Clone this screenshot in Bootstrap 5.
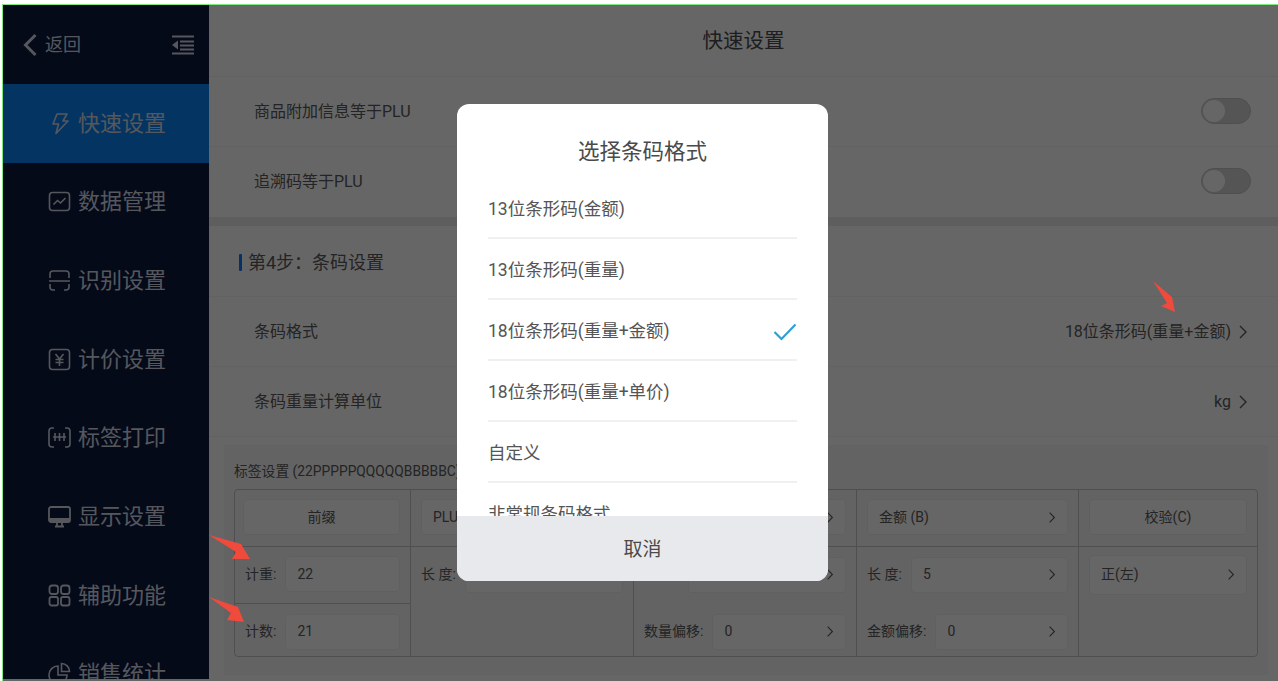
<!DOCTYPE html>
<html lang="zh-CN">
<head>
  <meta charset="UTF-8">
  <meta name="viewport" content="width=device-width, initial-scale=1.0">
  <title>快速设置</title>
  <link href="https://cdn.jsdelivr.net/npm/bootstrap@5.3.1/dist/css/bootstrap.min.css" rel="stylesheet">
  <style>
    html, body {
      height: 681px;
      overflow: hidden;
      background: #fff;
    }
    body {
      font-family: Roboto, "Noto Sans CJK SC", sans-serif;
      color: #5a5a5a;
    }
    .frame {
      position: relative;
      height: 677px;
      margin: 4px 0 0 2px;
      border-top: 1px solid #7fe87f;
      border-left: 1px solid #7fe87f;
      overflow: hidden;
      background: #fff;
    }
    .scrim {
      background: rgba(0, 0, 0, .6);
    }

    /* sidebar */
    .side {
      width: 206px;
      height: 674px;
      overflow: hidden;
      background: #0a193c;
      color: #d6dae6;
      flex: none;
    }
    .side-top {
      height: 79px;
      padding: 0 15px 0 20px;
      font-size: 18px;
    }
    .side-item {
      height: 78.67px;
      padding-left: 45px;
      gap: 7px;
      font-size: 22px;
    }
    .side-item.on {
      background: #0a84f5;
    }
    .side svg {
      flex: none;
    }

    /* main column */
    .page-head {
      height: 72px;
      padding-top: 2px;
      font-size: 20.5px;
      color: #4c4c4c;
      border-bottom: 1px solid #f3f3f3;
    }
    .set-row {
      height: 70px;
      padding: 0 27px 0 45px;
      font-size: 16px;
      border-bottom: 1px solid #f5f5f5;
    }
    .set-val {
      gap: 7px;
      font-size: 16px;
      margin-right: 3px;
    }
    .gap-band {
      height: 9px;
      background: #ececec;
    }
    .step-title {
      height: 71px;
      padding: 2px 0 0 30px;
      gap: 6px;
      font-size: 18px;
      border-bottom: 1px solid #f5f5f5;
    }
    .step-bar {
      width: 3px;
      height: 17px;
      border-radius: 1px;
      background: #0d7cff;
    }
    .toggle {
      width: 50px;
      height: 26px;
      margin-top: -2px;
      border-radius: 13px;
      background: #d4d4d4;
      border: 1px solid #c6c6c6;
      padding: 1px;
    }
    .toggle i {
      display: block;
      width: 22px;
      height: 22px;
      border-radius: 50%;
      background: #fff;
    }

    /* label panel */
    .label-panel {
      margin: 8px 10px 0 15px;
      padding: 16px 10px 18px;
      background: #f8f8f8;
    }
    .label-title {
      font-size: 13.8px;
      line-height: 20px;
      margin-bottom: 8px;
      white-space: nowrap;
    }
    .label-grid {
      height: 168px;
      border: 1px solid #c6c6c6;
      border-radius: 4px;
      font-size: 14px;
    }
    .gcol {
      flex: none;
      border-right: 1px solid #c6c6c6;
    }
    .gcol:last-child {
      border-right: 0;
    }
    .gcell {
      height: 57px;
      padding: 0 10px 2px 10px;
      gap: 9px;
      white-space: nowrap;
    }
    .gcell.line {
      border-bottom: 1px solid #c6c6c6;
    }
    .fbox {
      height: 36px;
      flex: 1;
      min-width: 0;
      padding: 0 11px;
      background: #fff;
      border: 1px solid #f0f0f0;
      border-radius: 4px;
    }
    .fbox.tall {
      height: 40px;
    }
    .fbox.wide {
      margin-left: -2px;
    }

    /* modal */
    .picker {
      position: absolute;
      top: 99px;
      left: 454px;
      width: 371px;
      height: 477px;
      border-radius: 12px;
      background: #fff;
      overflow: hidden;
    }
    .picker-title {
      height: 74px;
      padding-top: 23px;
      font-size: 21.5px;
      line-height: 50px;
      color: #4a4a4a;
      text-align: center;
    }
    .picker-list {
      height: 338px;
      overflow: hidden;
      padding: 0 31px;
    }
    .picker-row {
      height: 61px;
      padding-top: 4px;
      font-size: 17.5px;
      color: #555;
      border-bottom: 2px solid #f0f0f0;
      flex: none;
    }
    .picker-foot {
      height: 65px;
      padding-top: 4px;
      background: #e8e9ec;
      font-size: 19px;
      color: #4a4a4a;
    }
    .arrows {
      position: absolute;
      top: -5px;
      left: -3px;
    }
  </style>
</head>
<body>
  <svg width="0" height="0" class="position-absolute">
    <symbol id="chev" viewBox="0 0 10 16"><path d="M2 2l6 6-6 6" fill="none" stroke="currentColor" stroke-width="1.4"/></symbol>
  </svg>

  <div class="frame">
    <div class="d-flex h-100">
      <!-- Sidebar -->
      <nav class="side">
        <div class="side-top d-flex align-items-center">
          <svg width="14" height="24" viewBox="0 0 14 24" class="me-1"><path d="M12.500 2L2.500 12l10 10" fill="none" stroke="currentColor" stroke-width="3"/></svg>
          <span class="flex-grow-1 ps-1">返回</span>
          <svg width="22" height="20" viewBox="0 0 22 20"><path d="M0 1.500h22M8 6.500h14M8 10.500h14M8 14.500h14M0 18.500h22" fill="none" stroke="currentColor" stroke-width="2"/><path d="M6 5.500v9l-6-4.500z" fill="currentColor"/></svg>
        </div>
        <div class="side-item on d-flex align-items-center">
          <svg width="23" height="23" viewBox="0 0 23 23" fill="none" stroke="currentColor" stroke-width="1.6" stroke-linejoin="round"><path d="M9 2h10l-4 7h5L8 21.500l2.500-9.500H5z"/></svg>
          快速设置
        </div>
        <div class="side-item d-flex align-items-center">
          <svg width="23" height="23" viewBox="0 0 23 23" fill="none" stroke="currentColor" stroke-width="1.6"><rect x="1.500" y="2.500" width="20" height="18" rx="3"/><path d="M5.500 14.500l4-4 3 2.500 5-5"/></svg>
          数据管理
        </div>
        <div class="side-item d-flex align-items-center">
          <svg width="23" height="23" viewBox="0 0 23 23" fill="none" stroke="currentColor" stroke-width="1.6"><path d="M2 9V5a3 3 0 0 1 3-3h13a3 3 0 0 1 3 3v4M2 15v3a3 3 0 0 0 3 3h2M21 15v3a3 3 0 0 1-3 3h-2M1 12h21"/></svg>
          识别设置
        </div>
        <div class="side-item d-flex align-items-center">
          <svg width="23" height="23" viewBox="0 0 23 23" fill="none" stroke="currentColor" stroke-width="1.6"><rect x="1.500" y="1.500" width="20" height="20" rx="3"/><path d="M7.500 6l4 5 4-5M11.500 11v7M7.500 11.500h8M7.500 14.500h8"/></svg>
          计价设置
        </div>
        <div class="side-item d-flex align-items-center">
          <svg width="23" height="23" viewBox="0 0 23 23" fill="none" stroke="currentColor" stroke-width="1.6"><path d="M6 2H4a3 3 0 0 0-3 3v13a3 3 0 0 0 3 3h2M17 2h2a3 3 0 0 1 3 3v13a3 3 0 0 1-3 3h-2M7 7v8M11.500 7v8M16 7v8M5 11h13"/></svg>
          标签打印
        </div>
        <div class="side-item d-flex align-items-center">
          <svg width="23" height="23" viewBox="0 0 23 23" fill="none" stroke="currentColor" stroke-width="1.8"><rect x="1" y="2" width="21" height="15" rx="2"/><path d="M1 14.500h21" stroke-width="3"/><path d="M7 21.500h9M9 18v3M14 18v3"/></svg>
          显示设置
        </div>
        <div class="side-item d-flex align-items-center">
          <svg width="23" height="23" viewBox="0 0 23 23" fill="none" stroke="currentColor" stroke-width="1.8"><rect x="1.500" y="1.500" width="8.500" height="8.500" rx="2.500"/><rect x="13" y="1.500" width="8.500" height="8.500" rx="2.500"/><rect x="1.500" y="13" width="8.500" height="8.500" rx="2"/><rect x="13" y="13" width="8.500" height="8.500" rx="2"/></svg>
          辅助功能
        </div>
        <div class="side-item d-flex align-items-center">
          <svg width="23" height="23" viewBox="0 0 23 23" fill="none" stroke="currentColor" stroke-width="1.6"><path d="M10 4a9 9 0 1 0 9 9h-9z"/><path d="M13.500 1.500a8 8 0 0 1 8 8h-8z"/></svg>
          销售统计
        </div>
      </nav>

      <!-- Main -->
      <main class="flex-grow-1">
        <header class="page-head d-flex align-items-center justify-content-center">快速设置</header>
        <div class="set-row d-flex align-items-center justify-content-between">
          <span>商品附加信息等于PLU</span>
          <span class="toggle"><i></i></span>
        </div>
        <div class="set-row d-flex align-items-center justify-content-between border-0">
          <span>追溯码等于PLU</span>
          <span class="toggle"><i></i></span>
        </div>
        <div class="gap-band"></div>
        <div class="step-title d-flex align-items-center"><span class="step-bar"></span>第4步：条码设置</div>
        <div class="set-row d-flex align-items-center justify-content-between">
          <span>条码格式</span>
          <span class="set-val d-flex align-items-center">18位条形码(重量+金额)<svg width="10" height="16"><use href="#chev"/></svg></span>
        </div>
        <div class="set-row d-flex align-items-center justify-content-between">
          <span>条码重量计算单位</span>
          <span class="set-val d-flex align-items-center">kg<svg width="10" height="16"><use href="#chev"/></svg></span>
        </div>

        <section class="label-panel">
          <div class="label-title">标签设置 (22PPPPPQQQQQBBBBBC)</div>
          <div class="label-grid d-flex">
            <div class="gcol" style="width:176px">
              <div class="gcell line d-flex align-items-center"><span class="fbox wide d-flex align-items-center justify-content-center">前缀</span></div>
              <div class="gcell line d-flex align-items-center">计重:<span class="fbox d-flex align-items-center">22</span></div>
              <div class="gcell d-flex align-items-center">计数:<span class="fbox d-flex align-items-center">21</span></div>
            </div>
            <div class="gcol" style="width:223px">
              <div class="gcell line d-flex align-items-center"><span class="fbox d-flex align-items-center justify-content-between">PLU (P)<svg width="8" height="13"><use href="#chev"/></svg></span></div>
              <div class="gcell d-flex align-items-center">长 度:<span class="fbox d-flex align-items-center justify-content-between">5<svg width="8" height="13"><use href="#chev"/></svg></span></div>
            </div>
            <div class="gcol" style="width:223px">
              <div class="gcell line d-flex align-items-center"><span class="fbox d-flex align-items-center justify-content-between">数量 (Q)<svg width="8" height="13"><use href="#chev"/></svg></span></div>
              <div class="gcell d-flex align-items-center">长 度:<span class="fbox d-flex align-items-center justify-content-between">5<svg width="8" height="13"><use href="#chev"/></svg></span></div>
              <div class="gcell d-flex align-items-center">数量偏移:<span class="fbox d-flex align-items-center justify-content-between">0<svg width="8" height="13"><use href="#chev"/></svg></span></div>
            </div>
            <div class="gcol" style="width:222px">
              <div class="gcell line d-flex align-items-center"><span class="fbox d-flex align-items-center justify-content-between">金额 (B)<svg width="8" height="13"><use href="#chev"/></svg></span></div>
              <div class="gcell d-flex align-items-center">长 度:<span class="fbox d-flex align-items-center justify-content-between">5<svg width="8" height="13"><use href="#chev"/></svg></span></div>
              <div class="gcell d-flex align-items-center">金额偏移:<span class="fbox d-flex align-items-center justify-content-between">0<svg width="8" height="13"><use href="#chev"/></svg></span></div>
            </div>
            <div class="gcol flex-grow-1">
              <div class="gcell line d-flex align-items-center"><span class="fbox d-flex align-items-center justify-content-center">校验(C)</span></div>
              <div class="gcell d-flex align-items-center"><span class="fbox tall d-flex align-items-center justify-content-between">正(左)<svg width="8" height="13"><use href="#chev"/></svg></span></div>
            </div>
          </div>
        </section>
      </main>
    </div>

    <!-- Dimmed layer and dialog -->
    <div class="scrim position-absolute top-0 start-0 w-100 h-100"></div>
    <div class="picker d-flex flex-column">
      <div class="picker-title">选择条码格式</div>
      <div class="picker-list d-flex flex-column">
        <div class="picker-row d-flex align-items-center">13位条形码(金额)</div>
        <div class="picker-row d-flex align-items-center">13位条形码(重量)</div>
        <div class="picker-row d-flex align-items-center justify-content-between">18位条形码(重量+金额)
          <svg width="24" height="18" viewBox="0 0 24 18"><path d="M1.500 9l7 7L22.500 1.500" fill="none" stroke="#2d9fd8" stroke-width="2.200"/></svg>
        </div>
        <div class="picker-row d-flex align-items-center">18位条形码(重量+单价)</div>
        <div class="picker-row d-flex align-items-center">自定义</div>
        <div class="picker-row d-flex align-items-center">非常规条码格式</div>
      </div>
      <div class="picker-foot d-flex align-items-center justify-content-center">取消</div>
    </div>

    <!-- Red annotation arrows -->
    <svg class="arrows" width="1278" height="681" viewBox="0 0 1278 681" fill="#f04a3c">
      <polygon points="209,535 241,544 250,559 232,559 236,552"/>
      <polygon points="209,597 238,607 244,622 227,620 231,613"/>
      <polygon points="1153,281 1172,297 1175,312 1161,306 1167,303"/>
    </svg>
  </div>

  <script src="https://cdn.jsdelivr.net/npm/bootstrap@5.3.1/dist/js/bootstrap.bundle.min.js"></script>
</body>
</html>
